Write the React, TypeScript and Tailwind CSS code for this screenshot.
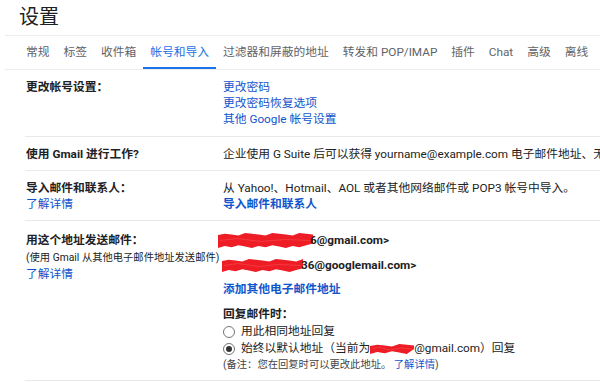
import React from "react";

const FONT = { fontFamily: 'Roboto, "Noto Sans CJK SC", "Noto Sans", sans-serif' };

function Scribble({ w, h, className }: { w: number; h: number; className?: string }) {
  const pts: string[] = [];
  const n = Math.max(6, Math.round(w / 7));
  for (let i = 0; i <= n; i++) {
    const x = (w * i) / n;
    const y = 1 + ((i * 37) % 4) * 0.8 + (i === 0 ? 2 : 0);
    pts.push(`${x.toFixed(1)},${y.toFixed(1)}`);
  }
  for (let i = n; i >= 0; i--) {
    const x = (w * i) / n;
    const y = h - 1 - ((i * 53) % 5) * 0.7 - (i === n ? 3 : 0);
    pts.push(`${x.toFixed(1)},${y.toFixed(1)}`);
  }
  return (
    <svg width={w} height={h} viewBox={`0 0 ${w} ${h}`} className={className}>
      <polygon points={pts.join(" ")} fill="#ee1c25" />
      <path
        d={`M2 ${h / 2} L${w * 0.2} ${h / 2 - 2} L${w * 0.45} ${h / 2 + 1} L${w * 0.7} ${h / 2 - 1} L${w - 2} ${h / 2}`}
        stroke="#f33a3f"
        strokeWidth={1}
        fill="none"
      />
    </svg>
  );
}

const tabs = [
  "常规",
  "标签",
  "收件箱",
  "帐号和导入",
  "过滤器和屏蔽的地址",
  "转发和 POP/IMAP",
  "插件",
  "Chat",
  "高级",
  "离线",
];

function Radio({ checked }: { checked?: boolean }) {
  return (
    <span className="w-[12px] h-[12px] rounded-full border border-[#757575] flex items-center justify-center mr-[6px] shrink-0 bg-white">
      {checked && <span className="w-[6px] h-[6px] rounded-full bg-[#333]" />}
    </span>
  );
}

export default function App() {
  return (
    <div className="w-[600px] h-[383px] overflow-hidden bg-white text-[#222]" style={FONT}>
      <div className="pl-[19px] pt-[3px] h-[35px] text-[20px] leading-[28px] text-[#202124]">设置</div>
      <div className="ml-[5px] h-[35px] border-t border-b border-[#ececec] flex pl-[14px] whitespace-nowrap">
        {tabs.map((t, i) => (
          <div
            key={t}
            className={
              "relative px-[7px] flex items-center text-[11.75px] " +
              (i === 3 ? "text-[#1a73e8]" : "text-[#5f6368]")
            }
          >
            {t}
            {i === 3 && <span className="absolute left-0 right-0 bottom-0 h-[2px] bg-[#1a73e8]" />}
          </div>
        ))}
      </div>

      <div className="ml-[25px] text-[11.75px] leading-[16px]">
        {/* row 1 */}
        <div className="flex border-b border-[#e9e9e9] pt-[9px] pb-[9px]">
          <div className="w-[198px] pl-[1px] font-bold text-[#202124]">更改帐号设置：</div>
          <div className="flex flex-col text-[#1155cc]">
            <span>更改密码</span>
            <span>更改密码恢复选项</span>
            <span>其他 Google 帐号设置</span>
          </div>
        </div>
        {/* row 2 */}
        <div className="flex border-b border-[#e9e9e9] pt-[9px] pb-[8px]">
          <div className="w-[198px] pl-[1px] font-bold text-[#202124] shrink-0">使用 Gmail 进行工作?</div>
          <div className="whitespace-nowrap overflow-hidden text-[#222]">
            企业使用 G Suite 后可以获得 yourname@example.com 电子邮件地址、无限存储空间
          </div>
        </div>
        {/* row 3 */}
        <div className="flex border-b border-[#e9e9e9] pt-[9px] pb-[8px]">
          <div className="w-[198px] pl-[1px] shrink-0 flex flex-col">
            <span className="font-bold text-[#202124]">导入邮件和联系人：</span>
            <span className="text-[#1155cc]">了解详情</span>
          </div>
          <div className="flex flex-col whitespace-nowrap">
            <span>从 Yahoo!、Hotmail、AOL 或者其他网络邮件或 POP3 帐号中导入。</span>
            <span className="font-bold text-[#1155cc]">导入邮件和联系人</span>
          </div>
        </div>
        {/* row 4 */}
        <div className="flex border-b border-[#e9e9e9] pt-[11px] pb-[8px] leading-[17px]">
          <div className="w-[198px] pl-[1px] shrink-0 flex flex-col">
            <span className="font-bold text-[#202124]">用这个地址发送邮件：</span>
            <span className="text-[10.3px] whitespace-nowrap">(使用 Gmail 从其他电子邮件地址发送邮件)</span>
            <span className="text-[#1155cc]">了解详情</span>
          </div>
          <div className="flex flex-col whitespace-nowrap">
            <div className="flex items-center font-bold h-[17px] -ml-[5px]">
              <Scribble w={95} h={17} />
              <span className="-ml-[3px]">6@gmail.com&gt;</span>
            </div>
            <div className="flex items-center font-bold h-[17px] mt-[8px] -ml-[1px]">
              <Scribble w={81} h={15} />
              <span className="-ml-[2px]">36@googlemail.com&gt;</span>
            </div>
            <span className="mt-[7px] font-bold text-[#1155cc]">添加其他电子邮件地址</span>
            <span className="mt-[8px] font-bold text-[#202124]">回复邮件时：</span>
            <div className="flex items-center h-[17px]">
              <Radio />
              <span>用此相同地址回复</span>
            </div>
            <div className="flex items-center h-[17px]">
              <Radio checked />
              <span>始终以默认地址（当前为</span>
              <Scribble w={44} h={12} />
              <span>@gmail.com）回复</span>
            </div>
            <span className="text-[10.3px] leading-[15px] text-[#444]">
              (备注：您在回复时可以更改此地址。 <span className="text-[#1155cc]">了解详情</span>)
            </span>
          </div>
        </div>
      </div>
    </div>
  );
}
